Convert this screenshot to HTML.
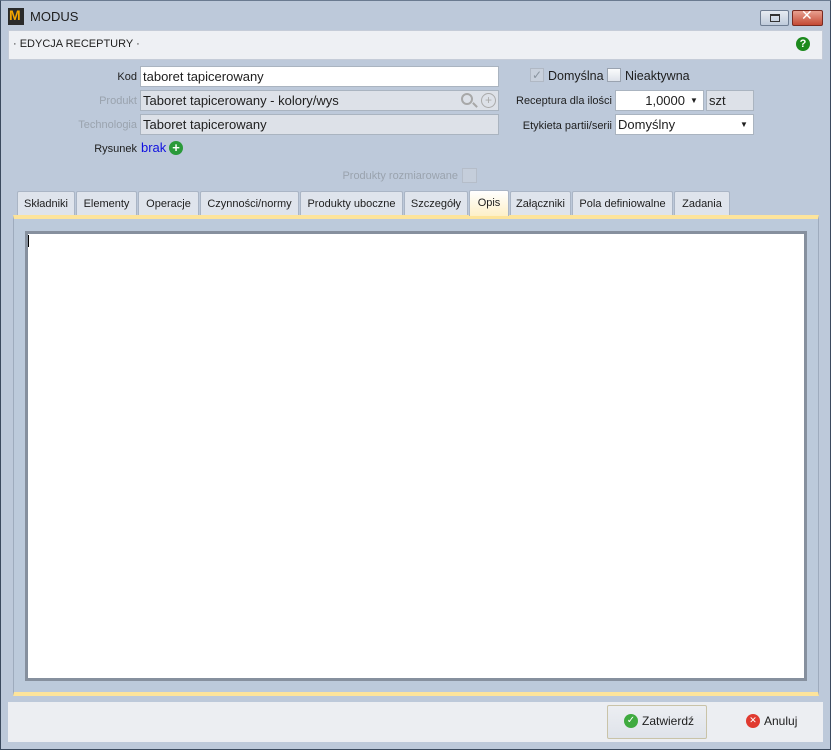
<!DOCTYPE html>
<html><head><meta charset="utf-8"><style>
*{margin:0;padding:0;box-sizing:border-box}
body{width:831px;height:750px;overflow:hidden;font-family:"Liberation Sans","DejaVu Sans",sans-serif;font-size:12px;color:#1e1e1e;background:#bccadb;position:relative}
.abs{position:absolute}
.win{left:0;top:0;width:831px;height:750px;border:1px solid #3b4a5e;border-top-color:#6a7a90;background:#bdc9da}
.lbl{position:absolute;text-align:right;font-size:11px}
.in{position:absolute;border:1px solid #aab4c0;background:#fff;font-size:13px;padding:1px 2px;height:21px;line-height:17px}
.dis{background:#dde1e8}
.tab{position:absolute;top:191px;height:24px;border:1px solid #aab5c5;border-bottom:none;background:#dfe4ec;font-size:11px;text-align:center;line-height:24px;border-radius:2px 2px 0 0}
</style></head><body>
<div class="abs win"></div>
<div class="abs" style="left:8px;top:8px;width:16px;height:17px;background:#2a2a2a"></div>
<div class="abs" style="left:9px;top:7px;font:bold 14px 'Liberation Sans';color:#f2a400">M</div>
<div class="abs" style="left:30px;top:9px;font-size:13px">MODUS</div>
<div class="abs" style="left:760px;top:10px;width:29px;height:16px;border:1px solid #6e7d92;border-radius:2px;background:linear-gradient(#e6ebf2,#bfcbdb)"></div>
<div class="abs" style="left:770px;top:14px;width:10px;height:8px;border:1px solid #333;border-top-width:2px"></div>
<div class="abs" style="left:792px;top:10px;width:31px;height:16px;border:1px solid #7a2a20;border-radius:2px;background:linear-gradient(#e8a090,#c44a35)"></div>
<div class="abs" style="left:801px;top:8px;color:#fff;font:bold 14px 'DejaVu Sans'">✕</div>
<div class="abs" style="left:8px;top:30px;width:815px;height:30px;background:#eef0f4;border:1px solid #c5ccd8"></div>
<div class="abs" style="left:13px;top:38px;font-size:11px">· EDYCJA RECEPTURY ·</div>
<div class="abs" style="left:796px;top:37px;width:14px;height:14px;border-radius:50%;background:#1d8a1d;color:#fff;font:bold 11px 'Liberation Sans';text-align:center;line-height:14px">?</div>

<div class="lbl" style="left:60px;width:77px;top:71px">Kod</div>
<div class="in" style="left:140px;top:66px;width:359px">taboret tapicerowany</div>
<div class="lbl" style="left:60px;width:77px;top:95px;color:#9aa3ae">Produkt</div>
<div class="in dis" style="left:140px;top:90px;width:359px">Taboret tapicerowany - kolory/wys</div>
<div class="abs" style="left:461px;top:93px;width:12px;height:12px;border:2px solid #a8a8a8;border-radius:50%"></div>
<div class="abs" style="left:472px;top:104px;width:6px;height:2px;background:#a8a8a8;transform:rotate(45deg)"></div>
<div class="abs" style="left:481px;top:93px;width:15px;height:15px;border:1px solid #aaa;border-radius:50%;color:#aaa;font-size:12px;text-align:center;line-height:13px">+</div>
<div class="lbl" style="left:40px;width:97px;top:119px;color:#9aa3ae">Technologia</div>
<div class="in dis" style="left:140px;top:114px;width:359px">Taboret tapicerowany</div>
<div class="lbl" style="left:60px;width:77px;top:143px">Rysunek</div>
<div class="abs" style="left:141px;top:140px;color:#1010e0;font-size:13px">brak</div>
<div class="abs" style="left:169px;top:141px;width:14px;height:14px;border-radius:50%;background:#2a9a3a;color:#fff;font:bold 13px 'Liberation Sans';text-align:center;line-height:14px">+</div>

<div class="abs" style="left:530px;top:68px;width:14px;height:14px;border:1px solid #b0b8c4;background:#c8d0dc;color:#8a949f;font-size:12px;line-height:12px;text-align:center">✓</div>
<div class="abs" style="left:548px;top:69px;font-size:12.5px">Domyślna</div>
<div class="abs" style="left:607px;top:68px;width:14px;height:14px;border:1px solid #9aa3b0;background:linear-gradient(#fafbfc,#dde2ea)"></div>
<div class="abs" style="left:625px;top:69px;font-size:12.5px">Nieaktywna</div>
<div class="lbl" style="left:480px;width:132px;top:95px">Receptura dla ilości</div>
<div class="in" style="left:615px;top:90px;width:89px;text-align:right;padding-right:18px">1,0000</div>
<div class="abs" style="left:690px;top:96px;font-size:8px">▼</div>
<div class="in dis" style="left:706px;top:90px;width:48px">szt</div>
<div class="lbl" style="left:480px;width:132px;top:120px">Etykieta partii/serii</div>
<div class="in" style="left:615px;top:114px;width:139px">Domyślny</div>
<div class="abs" style="left:740px;top:120px;font-size:8px">▼</div>

<div class="lbl" style="left:300px;width:158px;top:170px;color:#9aa3ae">Produkty rozmiarowane</div>
<div class="abs" style="left:462px;top:168px;width:15px;height:15px;border:1px solid #b5bdc9;background:#c5cedb"></div>

<div class="tab" style="left:17px;width:58px">Składniki</div>
<div class="tab" style="left:76px;width:61px">Elementy</div>
<div class="tab" style="left:138px;width:61px">Operacje</div>
<div class="tab" style="left:200px;width:99px">Czynności/normy</div>
<div class="tab" style="left:300px;width:103px">Produkty uboczne</div>
<div class="tab" style="left:404px;width:64px">Szczegóły</div>
<div class="tab" style="left:469px;width:40px;top:190px;height:26px;background:linear-gradient(#fff,#fdf0c8);z-index:2">Opis</div>
<div class="tab" style="left:510px;width:61px">Załączniki</div>
<div class="tab" style="left:572px;width:101px">Pola definiowalne</div>
<div class="tab" style="left:674px;width:56px">Zadania</div>

<div class="abs" style="left:13px;top:215px;width:806px;height:481px;border:1px solid #9eabbd;border-top:4px solid #fde49b;border-bottom:4px solid #fde49b;background:#bccadb"></div>
<div class="abs" style="left:25px;top:231px;width:782px;height:450px;background:#fff;border:3px solid #86909e"></div>
<div class="abs" style="left:28px;top:235px;width:1px;height:12px;background:#000"></div>

<div class="abs" style="left:8px;top:702px;width:815px;height:40px;background:#eceef2"></div>
<div class="abs" style="left:607px;top:705px;width:100px;height:34px;border:1px solid #c9c3a8;border-radius:2px;background:linear-gradient(#eceef2,#dfe3ea)"></div>
<div class="abs" style="left:624px;top:714px;width:14px;height:14px;border-radius:50%;background:#3faa3f;color:#fff;font-size:10px;text-align:center;line-height:14px">✓</div>
<div class="abs" style="left:642px;top:714px;font-size:12px">Zatwierdź</div>
<div class="abs" style="left:746px;top:714px;width:14px;height:14px;border-radius:50%;background:#e03a30;color:#fff;font:bold 9px 'DejaVu Sans';text-align:center;line-height:14px">✕</div>
<div class="abs" style="left:764px;top:714px;font-size:12px">Anuluj</div>
</body></html>
